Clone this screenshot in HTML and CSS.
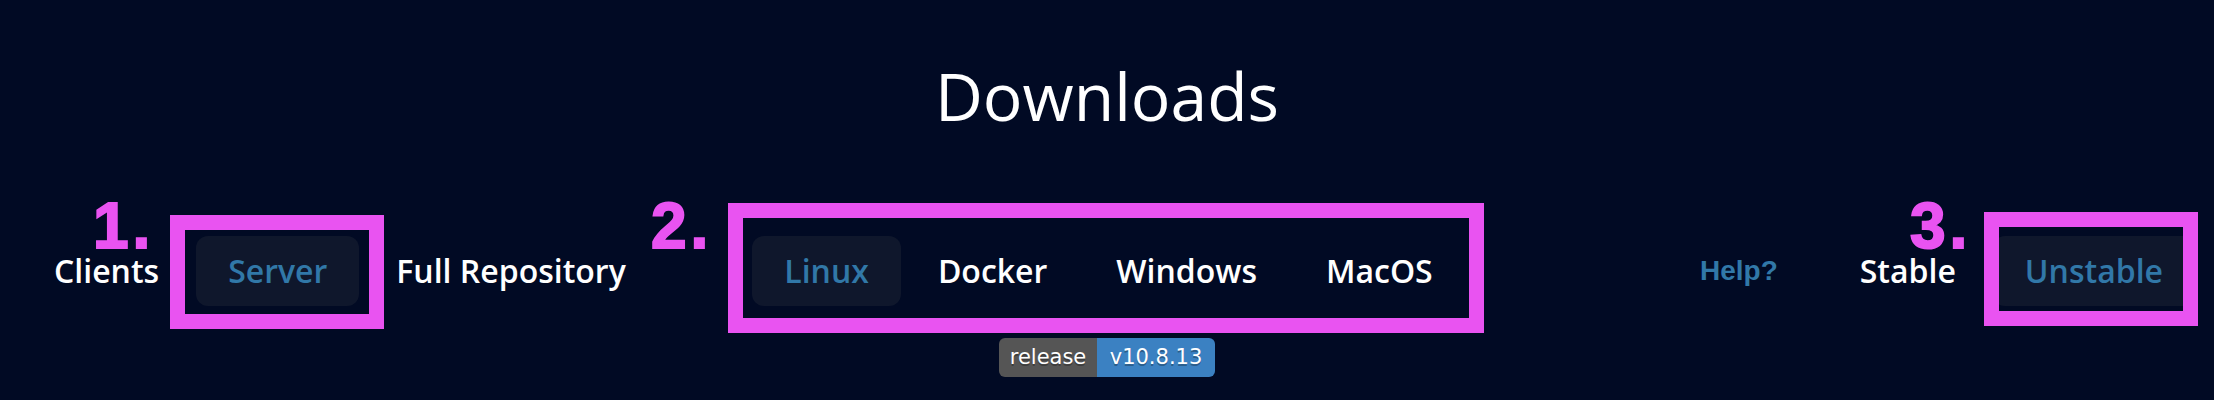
FILE: index.html
```html
<!DOCTYPE html>
<html lang="en">
<head>
<meta charset="utf-8">
<title>Downloads</title>
<link rel="stylesheet" href="styles.css">
</head>
<body>
<div class="page">
  <h1 class="title">Downloads</h1>
  <nav class="tabs-row">
    <div class="group group-left">
      <a class="tab">Clients</a>
      <a class="tab active">Server</a>
      <a class="tab">Full Repository</a>
    </div>
    <div class="group group-mid">
      <a class="tab active">Linux</a>
      <a class="tab">Docker</a>
      <a class="tab">Windows</a>
      <a class="tab">MacOS</a>
    </div>
    <div class="group group-right">
      <a class="help">Help?</a>
      <a class="tab">Stable</a>
      <a class="tab active">Unstable</a>
    </div>
  </nav>
  <div class="badge-row">
    <span class="badge"><span class="badge-label">release</span><span class="badge-value">v10.8.13</span></span>
  </div>

  <div class="annot-box box1"></div>
  <div class="annot-box box2"></div>
  <div class="annot-box box3"></div>
  <span class="annot-num n1">1.</span>
  <span class="annot-num n2">2.</span>
  <span class="annot-num n3">3.</span>
</div>
</body>
</html>
```

FILE: styles.css
```css
html, body {
  margin: 0;
  padding: 0;
  background: #010a24;
}

body {
  font-family: "Open Sans", "Noto Sans", sans-serif;
  color: #ffffff;
  height: 400px;
  overflow: hidden;
}

.page {
  position: relative;
  height: 400px;
}

.title {
  margin: 0;
  padding-top: 50px;
  font-size: 66px;
  font-weight: 400;
  line-height: normal;
  text-align: center;
  color: #ffffff;
}

.tabs-row {
  display: grid;
  grid-template-columns: 1fr auto 1fr;
  align-items: center;
  padding: 0 19px 0 22px;
  margin-top: 96px;
}

.group {
  display: flex;
  align-items: center;
  gap: 5px;
}

.group-right {
  justify-content: flex-end;
}

.tab {
  font-size: 32px;
  font-weight: 600;
  line-height: 48px;
  padding: 11px 32px;
  border-radius: 12px;
  color: #ffffff;
  text-decoration: none;
  white-space: nowrap;
}

.tab.active {
  background: #0f172c;
  color: #3178a8;
}

.help {
  font-family: "Liberation Sans", Arial, sans-serif;
  font-weight: 700;
  font-size: 28px;
  line-height: 48px;
  color: #3178a8;
  margin-right: 45px;
}

.badge-row {
  display: flex;
  justify-content: center;
  margin-top: 32px;
}

.badge {
  display: inline-flex;
  height: 39px;
  border-radius: 6px;
  overflow: hidden;
  font-family: "DejaVu Sans", Verdana, sans-serif;
  font-size: 21px;
  line-height: 39px;
  color: #ffffff;
  text-shadow: 0 2px 0 rgba(1, 1, 1, 0.3);
}

.badge-label {
  width: 98px;
  text-align: center;
  background: #555555;
}

.badge-value {
  width: 118px;
  text-align: center;
  background: #3b81c2;
}

.annot-box {
  position: absolute;
  box-sizing: border-box;
  border: 15px solid #e953f1;
}

.box1 { left: 170px; top: 215px; width: 214px; height: 114px; }
.box2 { left: 728px; top: 203px; width: 756px; height: 130px; }
.box3 { left: 1984px; top: 212px; width: 214px; height: 114px; }

.annot-num {
  position: absolute;
  top: 204px;
  font-family: "Liberation Sans", Arial, sans-serif;
  font-weight: 700;
  font-size: 64px;
  line-height: 44px;
  color: #e953f1;
  -webkit-text-stroke: 2px #e953f1;
  letter-spacing: 4px;
}

.n1 { left: 93px; }
.n2 { left: 651px; }
.n3 { left: 1910px; }
```
